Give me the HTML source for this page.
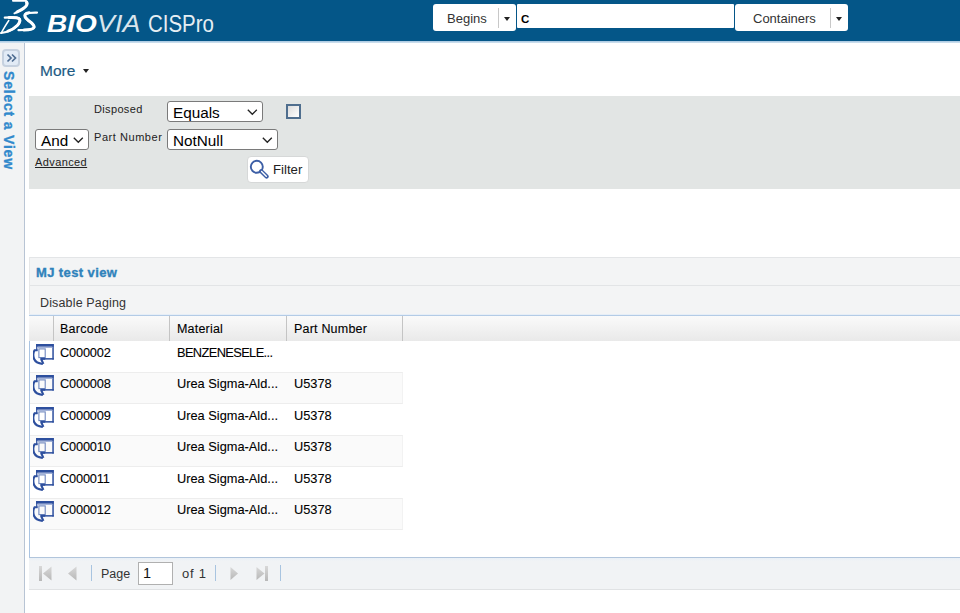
<!DOCTYPE html>
<html><head><meta charset="utf-8">
<style>
*{box-sizing:border-box;margin:0;padding:0}
html,body{width:960px;height:613px;overflow:hidden;background:#fff;font-family:"Liberation Sans",sans-serif;}
.a{position:absolute}
#hdr{left:0;top:0;width:960px;height:41px;background:#045688;}
#hdrline{left:0;top:41px;width:960px;height:2px;background:linear-gradient(#a6c6e0,#d4e4f0);}
#side{left:0;top:43px;width:25px;height:570px;background:#f2f3f4;border-right:1px solid #b8c4d4;}
#sbtn{left:2px;top:49px;width:18px;height:18px;border:2px solid #c6d1df;border-radius:4px;background:#e2ebf6;}
#selview{left:-41px;top:114px;width:100px;height:14px;transform:rotate(90deg);font-weight:bold;font-size:14px;line-height:14px;letter-spacing:0.8px;color:#3189cc;white-space:nowrap;-webkit-text-stroke:0.3px #3189cc;}
.btn{background:#fff;border-radius:3px;}
.sep{background:#c8c8c8;width:1px;}
.caret{width:0;height:0;border-left:3px solid transparent;border-right:3px solid transparent;border-top:4px solid #222;}
#more{left:40px;top:62px;font-size:15.5px;line-height:17px;color:#1e5b84;letter-spacing:0px;-webkit-text-stroke:0.2px #1e5b84}
#panel{left:29px;top:96px;width:931px;height:92.5px;background:#e2e5e4;}
.sel{background:#fff;border:1px solid #7a7a7a;border-radius:3px;font-size:14.6px;color:#000;}
.chev{position:absolute;width:7px;height:7px;border-right:1.3px solid #222;border-bottom:1.3px solid #222;transform:rotate(45deg);}
.seltxt{font-size:15.3px;line-height:17px;color:#000;white-space:nowrap}
.lbl{font-size:11px;color:#222;line-height:13px;white-space:nowrap;letter-spacing:0.35px}
#grid{left:29px;top:257px;width:931px;height:333px;}
.bc{font-size:12.8px !important;letter-spacing:0px}
.bcode{letter-spacing:-0.2px}
.cell{font-size:12.5px;color:#000;-webkit-text-stroke:0.1px #000;line-height:14px;white-space:nowrap}
</style></head><body>

<div id="hdr" class="a"></div>
<div id="hdrline" class="a"></div>

<!-- logo -->
<svg class="a" style="left:0;top:0" width="40" height="40" viewBox="0 0 40 40">
  <g fill="none" stroke="#fff" stroke-linecap="round">
    <path d="M13 0.8 L24.5 0.6 C28 0.8 28.5 4 26 6.5 C23 9 18.5 11.5 14.5 13.3" stroke-width="2"/>
    <path d="M26.5 2.5 C27.5 4.5 26 6.5 24 8 C21.5 10 19 11 17 12" stroke-width="3"/>
    <path d="M4.8 17.6 C11 17.2 16 17 18.8 18.2 C21 19.4 20.6 22 18 25 C14 29 8 32 1.2 33" stroke-width="2.2"/>
    <path d="M9 17.5 C14 17.3 17 17.5 18.8 18.6 C20.5 19.8 20 22.5 17.5 25.2 C15 27.8 12 29.8 8 31.2" stroke-width="3"/>
    <path d="M8.8 20.5 C6 24.5 3.5 29 1.2 33" stroke-width="1.5"/>
    <path d="M37 12.6 C32 12.5 27.5 12.6 25.3 14 C23.3 16 25 18.2 28 20.5 C32 23 35 25 34.2 27.6 C33.2 29.8 28 30.2 18.5 30.2" stroke-width="2.2"/>
    <path d="M29 12.7 C27 12.9 25.8 13.5 25.2 14.5 C24.3 16.3 26 18.3 28.5 20.5 C32 23 34.3 25 34 27.3 C33.4 29.3 30 29.9 24 30.1" stroke-width="3"/>
  </g>
</svg>
<div class="a" id="bio" style="left:47px;top:11px;font-size:23px;line-height:26px;color:#fff;white-space:nowrap;font-weight:bold;font-style:italic;transform-origin:0 0;transform:scaleX(1.22)">BIO</div>
<div class="a" id="via" style="opacity:0.85;left:97px;top:11px;font-size:23px;line-height:26px;color:#fff;white-space:nowrap;font-style:italic;transform-origin:0 0;transform:scaleX(1.17)">VIA</div>
<div class="a" id="cis" style="opacity:0.9;left:148px;top:11px;font-size:23px;line-height:26px;color:#fff;white-space:nowrap;transform-origin:0 0;transform:scaleX(0.89)">CISPro</div>

<!-- search -->
<div class="a btn" style="left:433px;top:4px;width:83px;height:27px;"></div>
<div class="a" style="left:447px;top:11px;font-size:13px;line-height:16px;color:#333">Begins</div>
<div class="a sep" style="left:498px;top:8px;height:20px;"></div>
<div class="a caret" style="left:504px;top:17px;"></div>
<div class="a" style="left:517px;top:4px;width:217px;height:24px;background:#fff;border-radius:1px"></div>
<div class="a" style="left:521px;top:11px;font-size:11.5px;font-weight:bold;line-height:16px;color:#000">C</div>
<div class="a btn" style="left:735px;top:4px;width:113px;height:27px;"></div>
<div class="a" style="left:753px;top:11px;font-size:13px;line-height:16px;color:#333">Containers</div>
<div class="a sep" style="left:830px;top:8px;height:20px;"></div>
<div class="a caret" style="left:836px;top:17px;"></div>

<!-- sidebar -->
<div id="side" class="a"></div>
<div id="sbtn" class="a"></div>
<svg class="a" style="left:6px;top:53px" width="12" height="10" viewBox="0 0 12 10"><path d="M1.5 1.5 L5 5 L1.5 8.5 M6 1.5 L9.5 5 L6 8.5" fill="none" stroke="#4f6d91" stroke-width="1.7"/></svg>
<div id="selview" class="a">Select a View</div>

<!-- More -->
<div id="more" class="a">More</div>
<div class="a caret" style="left:83px;top:69px;"></div>

<!-- filter panel -->
<div id="panel" class="a"></div>
<div class="a lbl" style="left:94px;top:103px;">Disposed</div>
<div class="a lbl" style="left:94px;top:131px;letter-spacing:0.55px">Part Number</div>
<div class="a sel" style="left:35px;top:129px;width:54px;height:21px;"></div>
<div class="a sel" style="left:167px;top:101px;width:96px;height:21px;"></div>
<div class="a sel" style="left:167px;top:129px;width:111px;height:21px;"></div>
<div class="a seltxt" style="left:41px;top:132px;">And</div>
<div class="a seltxt" style="left:173px;top:104px;">Equals</div>
<div class="a seltxt" style="left:173px;top:132px;">NotNull</div>
<svg class="a" style="left:73px;top:137px" width="11" height="7" viewBox="0 0 11 7"><path d="M0.8 0.8 L5.3 5.3 L9.8 0.8" fill="none" stroke="#222" stroke-width="1.3"/></svg>
<svg class="a" style="left:247px;top:109px" width="11" height="7" viewBox="0 0 11 7"><path d="M0.8 0.8 L5.3 5.3 L9.8 0.8" fill="none" stroke="#222" stroke-width="1.3"/></svg>
<svg class="a" style="left:262px;top:137px" width="11" height="7" viewBox="0 0 11 7"><path d="M0.8 0.8 L5.3 5.3 L9.8 0.8" fill="none" stroke="#222" stroke-width="1.3"/></svg>
<div class="a" style="left:247px;top:156px;width:62px;height:27px;background:#fff;border:1px solid #d6d8d8;border-radius:4px"></div>
<svg class="a" style="left:249px;top:159px" width="20" height="20" viewBox="0 0 20 20"><circle cx="7.8" cy="7.8" r="6" fill="#fff" stroke="#3d5fa6" stroke-width="1.9"/><path d="M12.2 12.2 L17.6 17.6" stroke="#3d5fa6" stroke-width="4.2" stroke-linecap="round"/><path d="M12.6 12.6 L17.3 17.3" stroke="#fff" stroke-width="1.4" stroke-linecap="round"/></svg>
<div class="a" style="left:273px;top:162px;font-size:13.2px;line-height:16px;color:#222">Filter</div>
<div class="a" style="left:286px;top:104px;width:15px;height:15px;border:2px solid #4f6e8e;background:linear-gradient(135deg,#dcdcdc,#fff);"></div>
<div class="a" style="left:35px;top:155px;font-size:11px;color:#222;text-decoration:underline;line-height:14px;letter-spacing:0.4px">Advanced</div>

<!-- grid -->
<div class="a" style="left:29px;top:257px;width:931px;height:1px;background:#e3e5e7"></div>
<div class="a" style="left:29px;top:258px;width:931px;height:27px;background:#f3f4f5"></div>
<div class="a" style="left:29px;top:285px;width:931px;height:1px;background:#e2e4e6"></div>
<div class="a" style="left:36px;top:265px;font-size:13px;font-weight:bold;color:#2f82bb;line-height:15px;white-space:nowrap;letter-spacing:0.4px;-webkit-text-stroke:0.35px #2f82bb">MJ test view</div>
<div class="a" style="left:29px;top:286px;width:931px;height:29px;background:#f3f4f5"></div>
<div class="a" style="left:29px;top:257px;width:1px;height:58px;background:#e6e7e8"></div>
<div class="a cell" style="left:40px;top:296px;color:#333;font-size:12.5px;-webkit-text-stroke:0;letter-spacing:0.15px">Disable Paging</div>
<div class="a" style="left:29px;top:314px;width:931px;height:1px;background:#e6eef7"></div>
<div class="a" style="left:29px;top:315px;width:931px;height:1px;background:#b3cbe6"></div>
<div class="a" style="left:29px;top:316px;width:931px;height:25px;background:linear-gradient(#fafafa,#e9e9e9)"></div>
<div class="a" style="left:53px;top:316px;width:1px;height:25px;background:#c4c4c4"></div>
<div class="a" style="left:169px;top:316px;width:1px;height:25px;background:#c4c4c4"></div>
<div class="a" style="left:286px;top:316px;width:1px;height:25px;background:#c4c4c4"></div>
<div class="a" style="left:402px;top:316px;width:1px;height:25px;background:#c4c4c4"></div>
<div class="a cell" style="left:60px;top:322px;letter-spacing:0.25px">Barcode</div>
<div class="a cell" style="left:177px;top:322px;letter-spacing:0.2px">Material</div>
<div class="a cell" style="left:294px;top:322px;letter-spacing:0.2px">Part Number</div>
<div class="a" style="left:29px;top:341px;width:1px;height:217px;background:#aac4e2"></div>
<svg class="a" style="left:33px;top:344px" width="21" height="21" viewBox="0 0 21 21"><rect x="3.1" y="0" width="17.6" height="2.7" fill="#2d4f9e"/>
<rect x="19.3" y="0" width="1.5" height="15.6" fill="#2d4f9e"/>
<rect x="8.7" y="14.1" width="12.1" height="1.5" fill="#2d4f9e"/>
<rect x="3.1" y="0" width="1.3" height="7" fill="#2d4f9e"/>
<rect x="4.4" y="2.9" width="14.9" height="1.1" fill="#a3b3d9"/>
<rect x="5.9" y="4.9" width="6.3" height="8.7" fill="none" stroke="#6f87bf" stroke-width="1.1"/>
<path d="M4.6 6.2 L1.6 6.2 C0.2 8.5 0 12 1.1 15 C2.2 17.6 5 19.4 9.8 20" fill="none" stroke="#2d4f9e" stroke-width="2.1"/>
<path d="M7.3 14.8 L12.2 14.8 M8.1 15 L10.4 19.9" fill="none" stroke="#2d4f9e" stroke-width="2.1"/></svg>
<div class="a cell bc bcode" style="left:60px;top:346px">C000002</div>
<div class="a cell bc" style="left:177px;top:346px;letter-spacing:-0.6px !important">BENZENESELE...</div>
<div class="a" style="left:30px;top:372px;width:373px;height:32px;background:#fafafa;border-top:1px solid #ededed;border-bottom:1px solid #ededed;border-right:1px solid #f2f2f2"></div>
<svg class="a" style="left:33px;top:375px" width="21" height="21" viewBox="0 0 21 21"><rect x="3.1" y="0" width="17.6" height="2.7" fill="#2d4f9e"/>
<rect x="19.3" y="0" width="1.5" height="15.6" fill="#2d4f9e"/>
<rect x="8.7" y="14.1" width="12.1" height="1.5" fill="#2d4f9e"/>
<rect x="3.1" y="0" width="1.3" height="7" fill="#2d4f9e"/>
<rect x="4.4" y="2.9" width="14.9" height="1.1" fill="#a3b3d9"/>
<rect x="5.9" y="4.9" width="6.3" height="8.7" fill="none" stroke="#6f87bf" stroke-width="1.1"/>
<path d="M4.6 6.2 L1.6 6.2 C0.2 8.5 0 12 1.1 15 C2.2 17.6 5 19.4 9.8 20" fill="none" stroke="#2d4f9e" stroke-width="2.1"/>
<path d="M7.3 14.8 L12.2 14.8 M8.1 15 L10.4 19.9" fill="none" stroke="#2d4f9e" stroke-width="2.1"/></svg>
<div class="a cell bc bcode" style="left:60px;top:377px">C000008</div>
<div class="a cell bc" style="left:177px;top:377px">Urea Sigma-Ald...</div>
<div class="a cell bc" style="left:294px;top:377px">U5378</div>
<svg class="a" style="left:33px;top:407px" width="21" height="21" viewBox="0 0 21 21"><rect x="3.1" y="0" width="17.6" height="2.7" fill="#2d4f9e"/>
<rect x="19.3" y="0" width="1.5" height="15.6" fill="#2d4f9e"/>
<rect x="8.7" y="14.1" width="12.1" height="1.5" fill="#2d4f9e"/>
<rect x="3.1" y="0" width="1.3" height="7" fill="#2d4f9e"/>
<rect x="4.4" y="2.9" width="14.9" height="1.1" fill="#a3b3d9"/>
<rect x="5.9" y="4.9" width="6.3" height="8.7" fill="none" stroke="#6f87bf" stroke-width="1.1"/>
<path d="M4.6 6.2 L1.6 6.2 C0.2 8.5 0 12 1.1 15 C2.2 17.6 5 19.4 9.8 20" fill="none" stroke="#2d4f9e" stroke-width="2.1"/>
<path d="M7.3 14.8 L12.2 14.8 M8.1 15 L10.4 19.9" fill="none" stroke="#2d4f9e" stroke-width="2.1"/></svg>
<div class="a cell bc bcode" style="left:60px;top:409px">C000009</div>
<div class="a cell bc" style="left:177px;top:409px">Urea Sigma-Ald...</div>
<div class="a cell bc" style="left:294px;top:409px">U5378</div>
<div class="a" style="left:30px;top:435px;width:373px;height:32px;background:#fafafa;border-top:1px solid #ededed;border-bottom:1px solid #ededed;border-right:1px solid #f2f2f2"></div>
<svg class="a" style="left:33px;top:438px" width="21" height="21" viewBox="0 0 21 21"><rect x="3.1" y="0" width="17.6" height="2.7" fill="#2d4f9e"/>
<rect x="19.3" y="0" width="1.5" height="15.6" fill="#2d4f9e"/>
<rect x="8.7" y="14.1" width="12.1" height="1.5" fill="#2d4f9e"/>
<rect x="3.1" y="0" width="1.3" height="7" fill="#2d4f9e"/>
<rect x="4.4" y="2.9" width="14.9" height="1.1" fill="#a3b3d9"/>
<rect x="5.9" y="4.9" width="6.3" height="8.7" fill="none" stroke="#6f87bf" stroke-width="1.1"/>
<path d="M4.6 6.2 L1.6 6.2 C0.2 8.5 0 12 1.1 15 C2.2 17.6 5 19.4 9.8 20" fill="none" stroke="#2d4f9e" stroke-width="2.1"/>
<path d="M7.3 14.8 L12.2 14.8 M8.1 15 L10.4 19.9" fill="none" stroke="#2d4f9e" stroke-width="2.1"/></svg>
<div class="a cell bc bcode" style="left:60px;top:440px">C000010</div>
<div class="a cell bc" style="left:177px;top:440px">Urea Sigma-Ald...</div>
<div class="a cell bc" style="left:294px;top:440px">U5378</div>
<svg class="a" style="left:33px;top:470px" width="21" height="21" viewBox="0 0 21 21"><rect x="3.1" y="0" width="17.6" height="2.7" fill="#2d4f9e"/>
<rect x="19.3" y="0" width="1.5" height="15.6" fill="#2d4f9e"/>
<rect x="8.7" y="14.1" width="12.1" height="1.5" fill="#2d4f9e"/>
<rect x="3.1" y="0" width="1.3" height="7" fill="#2d4f9e"/>
<rect x="4.4" y="2.9" width="14.9" height="1.1" fill="#a3b3d9"/>
<rect x="5.9" y="4.9" width="6.3" height="8.7" fill="none" stroke="#6f87bf" stroke-width="1.1"/>
<path d="M4.6 6.2 L1.6 6.2 C0.2 8.5 0 12 1.1 15 C2.2 17.6 5 19.4 9.8 20" fill="none" stroke="#2d4f9e" stroke-width="2.1"/>
<path d="M7.3 14.8 L12.2 14.8 M8.1 15 L10.4 19.9" fill="none" stroke="#2d4f9e" stroke-width="2.1"/></svg>
<div class="a cell bc bcode" style="left:60px;top:472px">C000011</div>
<div class="a cell bc" style="left:177px;top:472px">Urea Sigma-Ald...</div>
<div class="a cell bc" style="left:294px;top:472px">U5378</div>
<div class="a" style="left:30px;top:498px;width:373px;height:32px;background:#fafafa;border-top:1px solid #ededed;border-bottom:1px solid #ededed;border-right:1px solid #f2f2f2"></div>
<svg class="a" style="left:33px;top:501px" width="21" height="21" viewBox="0 0 21 21"><rect x="3.1" y="0" width="17.6" height="2.7" fill="#2d4f9e"/>
<rect x="19.3" y="0" width="1.5" height="15.6" fill="#2d4f9e"/>
<rect x="8.7" y="14.1" width="12.1" height="1.5" fill="#2d4f9e"/>
<rect x="3.1" y="0" width="1.3" height="7" fill="#2d4f9e"/>
<rect x="4.4" y="2.9" width="14.9" height="1.1" fill="#a3b3d9"/>
<rect x="5.9" y="4.9" width="6.3" height="8.7" fill="none" stroke="#6f87bf" stroke-width="1.1"/>
<path d="M4.6 6.2 L1.6 6.2 C0.2 8.5 0 12 1.1 15 C2.2 17.6 5 19.4 9.8 20" fill="none" stroke="#2d4f9e" stroke-width="2.1"/>
<path d="M7.3 14.8 L12.2 14.8 M8.1 15 L10.4 19.9" fill="none" stroke="#2d4f9e" stroke-width="2.1"/></svg>
<div class="a cell bc bcode" style="left:60px;top:503px">C000012</div>
<div class="a cell bc" style="left:177px;top:503px">Urea Sigma-Ald...</div>
<div class="a cell bc" style="left:294px;top:503px">U5378</div>
<div class="a" style="left:29px;top:557px;width:931px;height:1px;background:#b1c5dc"></div>
<div class="a" style="left:29px;top:558px;width:931px;height:31px;background:linear-gradient(#e9f0f7,#f1f3f5 3px,#f1f3f5)"></div>
<div class="a" style="left:29px;top:589px;width:931px;height:1px;background:#e0e2e4"></div>
<svg class="a" style="left:38px;top:565px" width="16" height="17" viewBox="0 0 16 17"><defs><linearGradient id="pg" x1="0" x2="0" y1="0" y2="1"><stop offset="0" stop-color="#d8d8d8"/><stop offset="1" stop-color="#b8b8b8"/></linearGradient></defs><rect x="1" y="1" width="3" height="15" fill="url(#pg)"/><path d="M13.5 1.5 L13.5 15.5 L5 8.5Z" fill="url(#pg)"/></svg>
<svg class="a" style="left:67px;top:565px" width="12" height="17" viewBox="0 0 12 17"><path d="M9.5 1.5 L9.5 15.5 L1 8.5Z" fill="url(#pg)"/></svg>
<div class="a" style="left:91px;top:565px;width:1px;height:16px;background:#a8c4e0"></div>
<div class="a" style="left:101px;top:567px;font-size:12.5px;line-height:15px;color:#333">Page</div>
<div class="a" style="left:138px;top:562px;width:35px;height:23px;background:#fff;border:1px solid #b0b0b0"></div>
<div class="a" style="left:143px;top:565px;font-size:14.5px;line-height:16px;color:#111">1</div>
<div class="a" style="left:182px;top:566px;font-size:13px;line-height:15px;color:#333;letter-spacing:0.8px">of 1</div>
<div class="a" style="left:215px;top:565px;width:1px;height:16px;background:#a8c4e0"></div>
<svg class="a" style="left:229px;top:565px" width="12" height="17" viewBox="0 0 12 17"><path d="M1.5 2 L1.5 15 L9 8.5Z" fill="url(#pg)"/></svg>
<svg class="a" style="left:255px;top:565px" width="16" height="17" viewBox="0 0 16 17"><path d="M1.5 2 L1.5 15 L9.5 8.5Z" fill="url(#pg)"/><rect x="10" y="1" width="3" height="15" fill="url(#pg)"/></svg>
<div class="a" style="left:280px;top:565px;width:1px;height:16px;background:#a8c4e0"></div>

</body></html>
